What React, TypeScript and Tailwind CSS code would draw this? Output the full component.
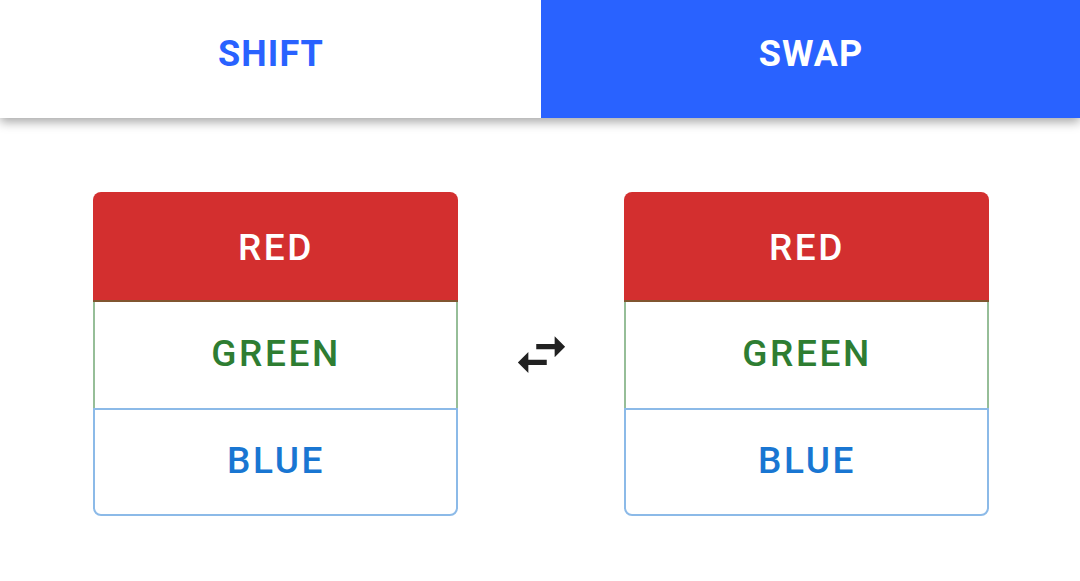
import { useState } from "react";

type Mode = "shift" | "swap";

const items = [
  { label: "RED", box: "h-[110px] pt-[4px] bg-[#d32f2f] text-white rounded-t-lg border-b-2 border-[#805630]" },
  { label: "GREEN", box: "h-[106px] pb-[2px] text-[#2e7d32] border-x-2 border-[#2e7d32]/50" },
  { label: "BLUE", box: "h-[108px] pb-[2px] text-[#1976d2] border-2 border-[#1976d2]/50 rounded-b-lg" },
];

function ColorStack() {
  return (
    <div className="flex w-[365px] flex-col">
      {items.map((it) => (
        <div
          key={it.label}
          className={`flex items-center justify-center pl-[1px] text-[37px] font-medium tracking-[0.07em] ${it.box}`}
        >
          {it.label}
        </div>
      ))}
    </div>
  );
}

function SwapIcon() {
  return (
    <svg width="63" height="63" viewBox="0 0 24 24" className="text-[#212121]">
      <path fill="currentColor" d="M6.99 11L3 15l3.99 4v-3H14v-2H6.99v-3zM21 9l-3.99-4v3H10v2h7.01v3L21 9z" />
    </svg>
  );
}

export default function App() {
  const [mode, setMode] = useState<Mode>("swap");

  const tab = (m: Mode) =>
    `flex items-center justify-center pb-[10px] pl-[1px] text-[36px] font-bold tracking-[0.03em] ${
      mode === m ? "bg-[#2962ff] text-white" : "bg-white text-[#2962ff]"
    }`;

  return (
    <div className="h-[581px] w-[1080px] overflow-hidden bg-white font-['Roboto',sans-serif]">
      <div className="relative z-10 flex h-[118px] shadow-[0_4px_10px_rgba(0,0,0,0.35)]">
        <button onClick={() => setMode("shift")} className={`w-[541px] ${tab("shift")}`}>
          SHIFT
        </button>
        <button onClick={() => setMode("swap")} className={`flex-1 ${tab("swap")}`}>
          SWAP
        </button>
      </div>
      <div className="flex items-start pl-[93px] pt-[74px]">
        <ColorStack />
        <div className="flex h-[324px] w-[166px] items-center justify-center pt-[1px]">
          <SwapIcon />
        </div>
        <ColorStack />
      </div>
    </div>
  );
}
